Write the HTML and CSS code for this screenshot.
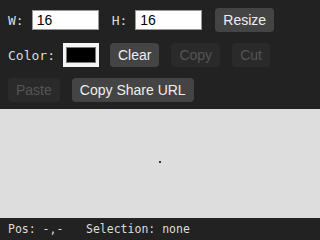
FILE: index.html
```html
<!DOCTYPE html>
<html lang="en">
<head>
    <meta charset="UTF-8">
    <meta name="viewport" content="width=device-width, initial-scale=1.0">
    <title>Pixel Editor</title>
    <link rel="stylesheet" href="styles.css">
</head>
<body>

<div class="app">
    <div class="toolbar">
        <div class="row">
            <label class="label">W:</label>
            <input type="text" class="size-input" value="16">
            <label class="label">H:</label>
            <input type="text" class="size-input" value="16">
            <button class="btn">Resize</button>
        </div>
        <div class="row">
            <label class="label">Color:</label>
            <span class="swatch"><span class="swatch-fill"></span></span>
            <button class="btn">Clear</button>
            <button class="btn" disabled>Copy</button>
            <button class="btn" disabled>Cut</button>
        </div>
        <div class="row">
            <button class="btn" disabled>Paste</button>
            <button class="btn">Copy Share URL</button>
        </div>
    </div>

    <div class="canvas-area">
        <div class="pixel"></div>
    </div>

    <div class="status">
        <span class="pos">Pos: -,-</span>
        <span>Selection: none</span>
    </div>
</div>

</body>
</html>
```

FILE: styles.css
```css
body {
    margin: 0;
    background: #222;
    font-family: "Liberation Sans", Arial, sans-serif;
}
.app {
    display: flex;
    flex-direction: column;
    height: 240px;
}
.toolbar {
    padding: 8px 8px 7px;
    display: flex;
    flex-direction: column;
    gap: 11px;
}
.row {
    display: flex;
    align-items: center;
    height: 24px;
}
.label {
    font-family: "DejaVu Sans Mono", monospace;
    font-size: 13px;
    color: #ddd;
    margin-right: 8px;
}
.size-input {
    width: 67px;
    height: 20px;
    box-sizing: border-box;
    border: 1px solid #999;
    padding: 0 4px;
    font-family: "Liberation Sans", Arial, sans-serif;
    font-size: 14px;
    color: #000;
    background: #fff;
    margin-right: 13px;
    outline: none;
}
.swatch {
    display: inline-flex;
    width: 36px;
    height: 24px;
    box-sizing: border-box;
    padding: 4px 3px;
    background: #f4f4f4;
    margin-right: 11px;
}
.swatch-fill {
    flex: 1;
    background: #000;
    border: 1px solid #777;
}
.btn {
    height: 24px;
    padding: 0 8px;
    margin-right: 12px;
    border: none;
    border-radius: 4px;
    background: #444;
    color: #eee;
    font-family: "Liberation Sans", Arial, sans-serif;
    font-size: 14px;
}
.btn:disabled {
    background: #2a2a2a;
    color: #555;
}
.canvas-area {
    flex: 1;
    background: #ddd;
    position: relative;
}
.pixel {
    position: absolute;
    left: 159px;
    top: 52px;
    width: 2px;
    height: 2px;
    background: #333;
}
.status {
    height: 22px;
    display: flex;
    align-items: center;
    padding: 0 8px;
    font-family: "DejaVu Sans Mono", monospace;
    font-size: 11.5px;
    color: #ddd;
}
.pos {
    width: 78px;
}
```
